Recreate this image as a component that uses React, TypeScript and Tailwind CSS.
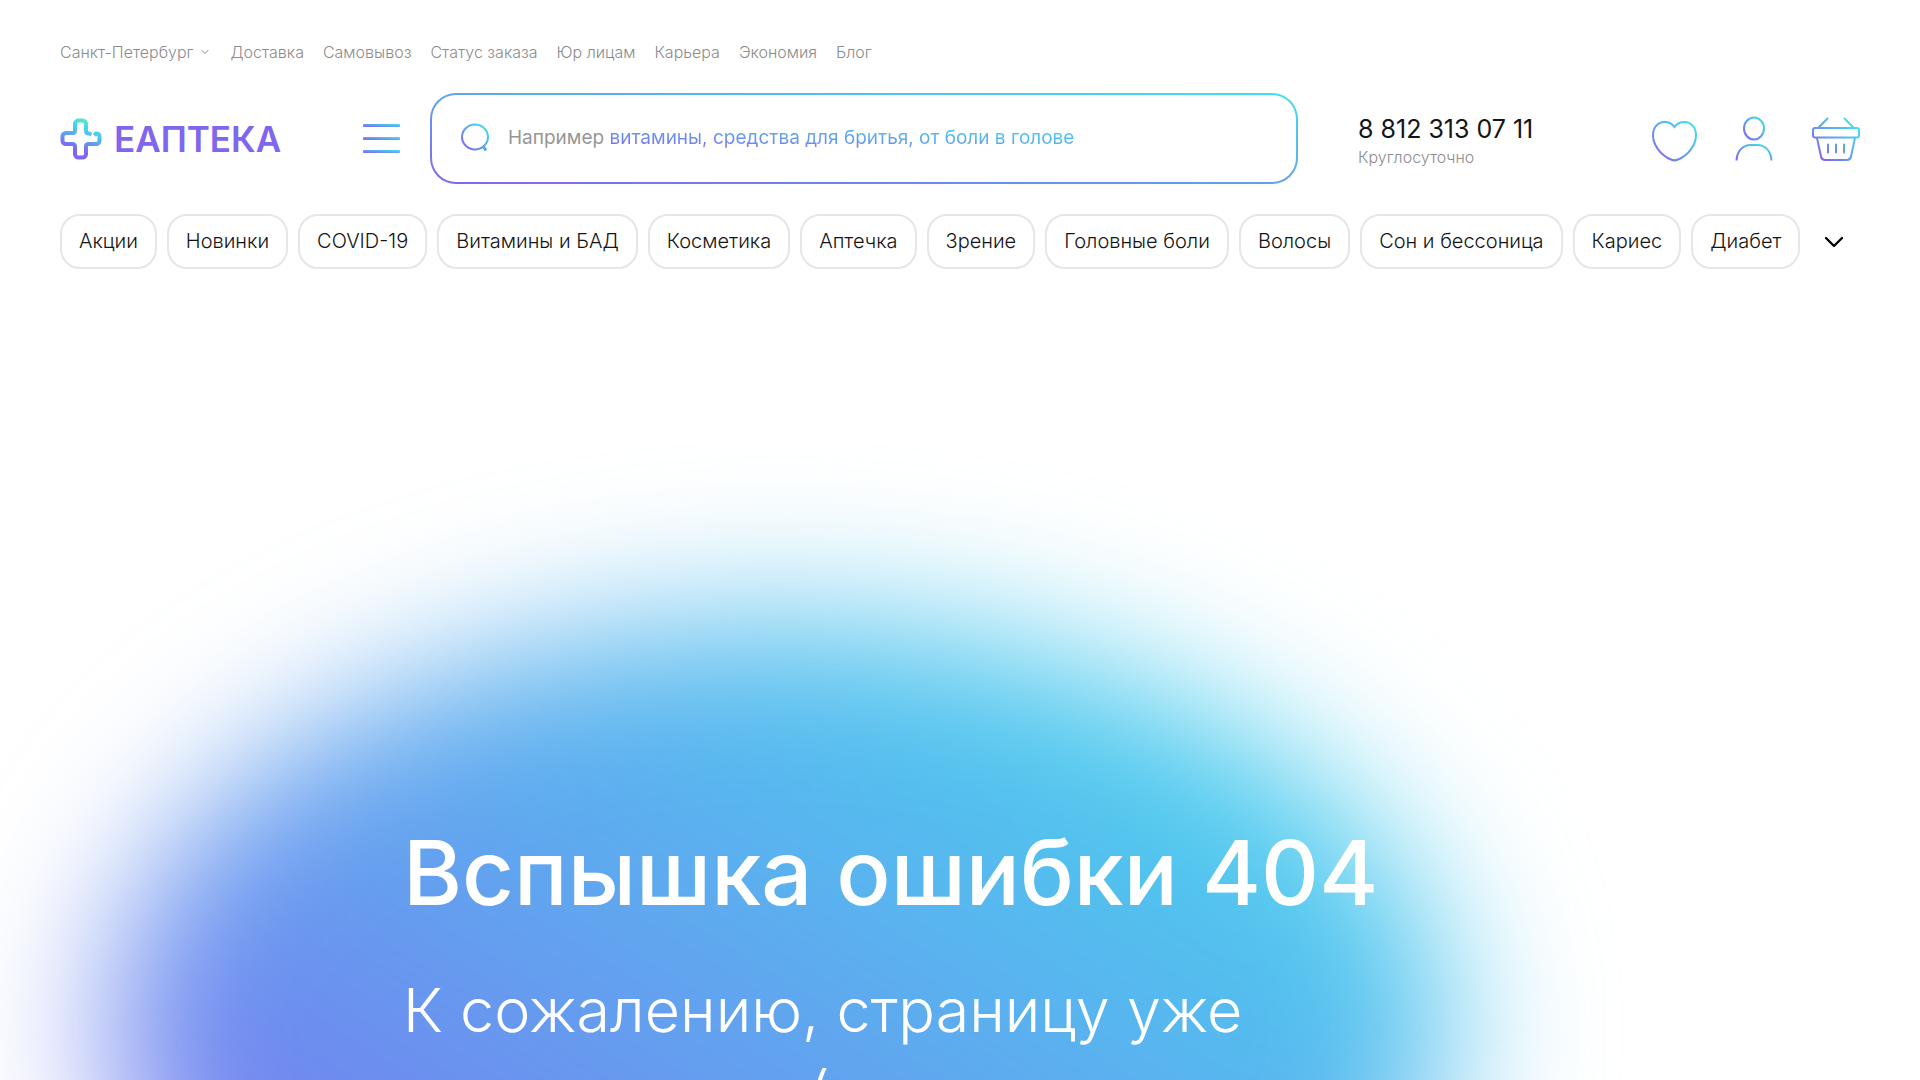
import React from "react";
import { ChevronDown } from "lucide-react";

const topLinks = ["Доставка", "Самовывоз", "Статус заказа", "Юр лицам", "Карьера", "Экономия", "Блог"];

const categories = [
  "Акции",
  "Новинки",
  "COVID-19",
  "Витамины и БАД",
  "Косметика",
  "Аптечка",
  "Зрение",
  "Головные боли",
  "Волосы",
  "Сон и бессоница",
  "Кариес",
  "Диабет",
];

const BrandGradient = ({ id }: { id: string }) => (
  <linearGradient id={id} x1="0" y1="1" x2="1" y2="0">
    <stop offset="0.05" stopColor="#8265f0" />
    <stop offset="0.95" stopColor="#40e0ee" />
  </linearGradient>
);

const Logo = () => (
  <a href="#" className="flex items-center gap-3">
    <svg width="42" height="42" viewBox="0 0 42 42" fill="none" aria-hidden="true">
      <defs>
        <linearGradient id="logo" x1="16" y1="36" x2="28" y2="2" gradientUnits="userSpaceOnUse">
          <stop offset="0.1" stopColor="#8066ef" />
          <stop offset="0.8" stopColor="#42dcee" />
          <stop offset="1" stopColor="#5ee8b4" />
        </linearGradient>
      </defs>
      <path
        d="M31.500 16.500 29 15.500c-1.800 0-3-1-3-3V6c0-2-1.500-3.500-3.500-3.500h-4C16.500 2.500 15 4 15 6v6.500c0 1.800-1 2.500-2.500 2.500H6c-2 0-3.500 1.500-3.500 3.500v4C2.500 24.500 4 26 6 26h6.500c1.500 0 2.500 1 2.500 2.500V36c0 2 1.500 3.500 3.500 3.500h4c2 0 3.500-1.500 3.500-3.500v-7.500c0-1.500 1-2.500 2.500-2.500H36c2 0 3.500-1.500 3.500-3.500v-4c0-2-1-3-3.500-3l-1.500 2"
        stroke="url(#logo)"
        strokeWidth="4"
      />
    </svg>
    <span className="text-[35px] leading-10 font-semibold text-[#8066ef]">ЕАПТЕКА</span>
  </a>
);

const SearchIcon = () => (
  <svg width="30" height="30" viewBox="0 0 30 30" fill="none" aria-hidden="true">
    <defs>
      <BrandGradient id="search" />
    </defs>
    <ellipse cx="15" cy="14" rx="13" ry="12.500" stroke="url(#search)" strokeWidth="2" />
    <path d="m23 23 3 4.500" stroke="#56a8ee" strokeWidth="3" />
  </svg>
);

const HeartIcon = () => (
  <svg width="48" height="46" viewBox="0 0 48 46" fill="none" aria-hidden="true">
    <defs>
      <BrandGradient id="heart" />
    </defs>
    <path
      d="M24.500 11C22 7.500 18.500 6 14.500 6 8 6 3 11.500 3 19c0 10 7.500 20 18 24.500 2 1 5 1 7 0C38.500 39 46 29 46 19c0-7.500-5-13-11.500-13-4 0-7.500 1.500-10 5Z"
      stroke="url(#heart)"
      strokeWidth="2"
    />
  </svg>
);

const UserIcon = () => (
  <svg width="42" height="46" viewBox="0 0 42 46" fill="none" aria-hidden="true">
    <defs>
      <BrandGradient id="user" />
    </defs>
    <g stroke="url(#user)" strokeWidth="2">
      <ellipse cx="20" cy="12.500" rx="10" ry="11" />
      <path d="M2.500 44.500C3 35 9 29 16.500 29h7C31 29 37 35 37.500 44.500" />
    </g>
  </svg>
);

const BasketIcon = () => (
  <svg width="48" height="46" viewBox="0 0 48 46" fill="none" aria-hidden="true">
    <defs>
      <linearGradient id="basket" x1="8" y1="42" x2="42" y2="8" gradientUnits="userSpaceOnUse">
        <stop stopColor="#8265f0" />
        <stop offset="1" stopColor="#40e0ee" />
      </linearGradient>
    </defs>
    <g stroke="url(#basket)" strokeWidth="2" strokeLinecap="round">
      <rect x="1" y="12" width="46" height="9.500" rx="2" />
      <path d="m7 11 8.500-8.500M41 11l-8.500-8.500" />
      <path d="m5 22 4 18.500c.5 2.300 1.800 3.500 4 3.500h22c2.200 0 3.500-1.200 4-3.500L43 22" />
      <path d="M16 28.500v8M24 28.500v8M32 28.500v8" />
    </g>
  </svg>
);

const Header = () => (
  <header className="px-15 pt-10">
    <nav className="flex items-center gap-[19px] text-base leading-6 font-light text-[#8c8c8c]">
      <button className="flex items-center gap-1.5">
        Санкт-Петербург
        <ChevronDown className="w-3 h-3" strokeWidth={2} />
      </button>
      {topLinks.map((link) => (
        <a key={link} href="#">
          {link}
        </a>
      ))}
    </nav>

    <div className="mt-[29px] flex items-center">
      <div className="w-[302px] shrink-0">
        <Logo />
      </div>
      <button className="mr-7 flex shrink-0" aria-label="Меню">
        <svg width="40" height="32" viewBox="0 0 40 32" aria-hidden="true">
          <defs>
            <BrandGradient id="menu" />
          </defs>
          <rect x="1" y="1" width="37" height="3" rx="1" fill="url(#menu)" />
          <rect x="1" y="14" width="37" height="3" rx="1" fill="url(#menu)" />
          <rect x="1" y="27" width="37" height="3" rx="1" fill="url(#menu)" />
        </svg>
      </button>

      {/* Search */}
      <form className="flex-1 rounded-[26px] bg-linear-to-tr/srgb from-[#8265f0] to-[#40e0ee] p-0.5">
        <label className="relative flex h-[87px] items-center gap-[18px] rounded-3xl bg-white pb-0.5 pl-7">
          <SearchIcon />
          <input
            type="search"
            aria-label="Поиск"
            placeholder=" "
            className="peer absolute inset-0 rounded-3xl bg-transparent pl-19 text-[19px] outline-none"
          />
          <span className="hidden whitespace-nowrap text-[19px] leading-7 text-[#969696] peer-placeholder-shown:block">
            Например{" "}
            <span className="bg-linear-to-tr/srgb from-[#8265f0] to-[#40e0ee] bg-clip-text text-transparent">
              витамины, средства для бритья, от боли в голове
            </span>
          </span>
        </label>
      </form>

      <div className="ml-15 w-[292px] shrink-0 pt-1">
        <a href="tel:88123130711" className="block text-[25px] leading-8 text-[#141414]">
          8 812 313 07 11
        </a>
        <p className="text-base leading-6 font-light text-[#8c8c8c]">Круглосуточно</p>
      </div>
      <div className="flex shrink-0 items-center gap-9">
        <button aria-label="Избранное">
          <HeartIcon />
        </button>
        <button aria-label="Профиль">
          <UserIcon />
        </button>
        <button aria-label="Корзина">
          <BasketIcon />
        </button>
      </div>
    </div>

    <nav className="mt-[30px] flex items-center gap-2.5">
      {categories.map((item) => (
        <a
          key={item}
          href="#"
          className="flex h-[55px] items-center whitespace-nowrap rounded-[20px] border-2 border-[#e6e6e6] px-[17px] pb-0.5 text-xl font-light text-[#141414]"
        >
          {item}
        </a>
      ))}
      <button className="px-2" aria-label="Ещё">
        <ChevronDown className="h-8 w-8" strokeWidth={1.75} />
      </button>
    </nav>
  </header>
);

export default function App() {
  return (
    <div className="flex h-screen flex-col overflow-hidden bg-white font-[Inter,sans-serif]">
      <Header />
      <main className="relative flex-1 pt-[544px] pl-[403px]">
        <div className="absolute top-[350px] left-[110px] h-[820px] w-[1340px] rounded-[50%] bg-linear-to-tr/srgb from-[#8265f0] to-[#40e4ee] blur-[75px]" />
        <div className="relative text-white">
          <h1 className="text-[90px] leading-[120px] font-medium whitespace-nowrap">Вспышка ошибки 404</h1>
          <p className="mt-9 text-[61px] leading-[83px] font-light whitespace-nowrap">
            К сожалению, страницу уже
            <br />
            не вылечишь (
          </p>
        </div>
      </main>
    </div>
  );
}
